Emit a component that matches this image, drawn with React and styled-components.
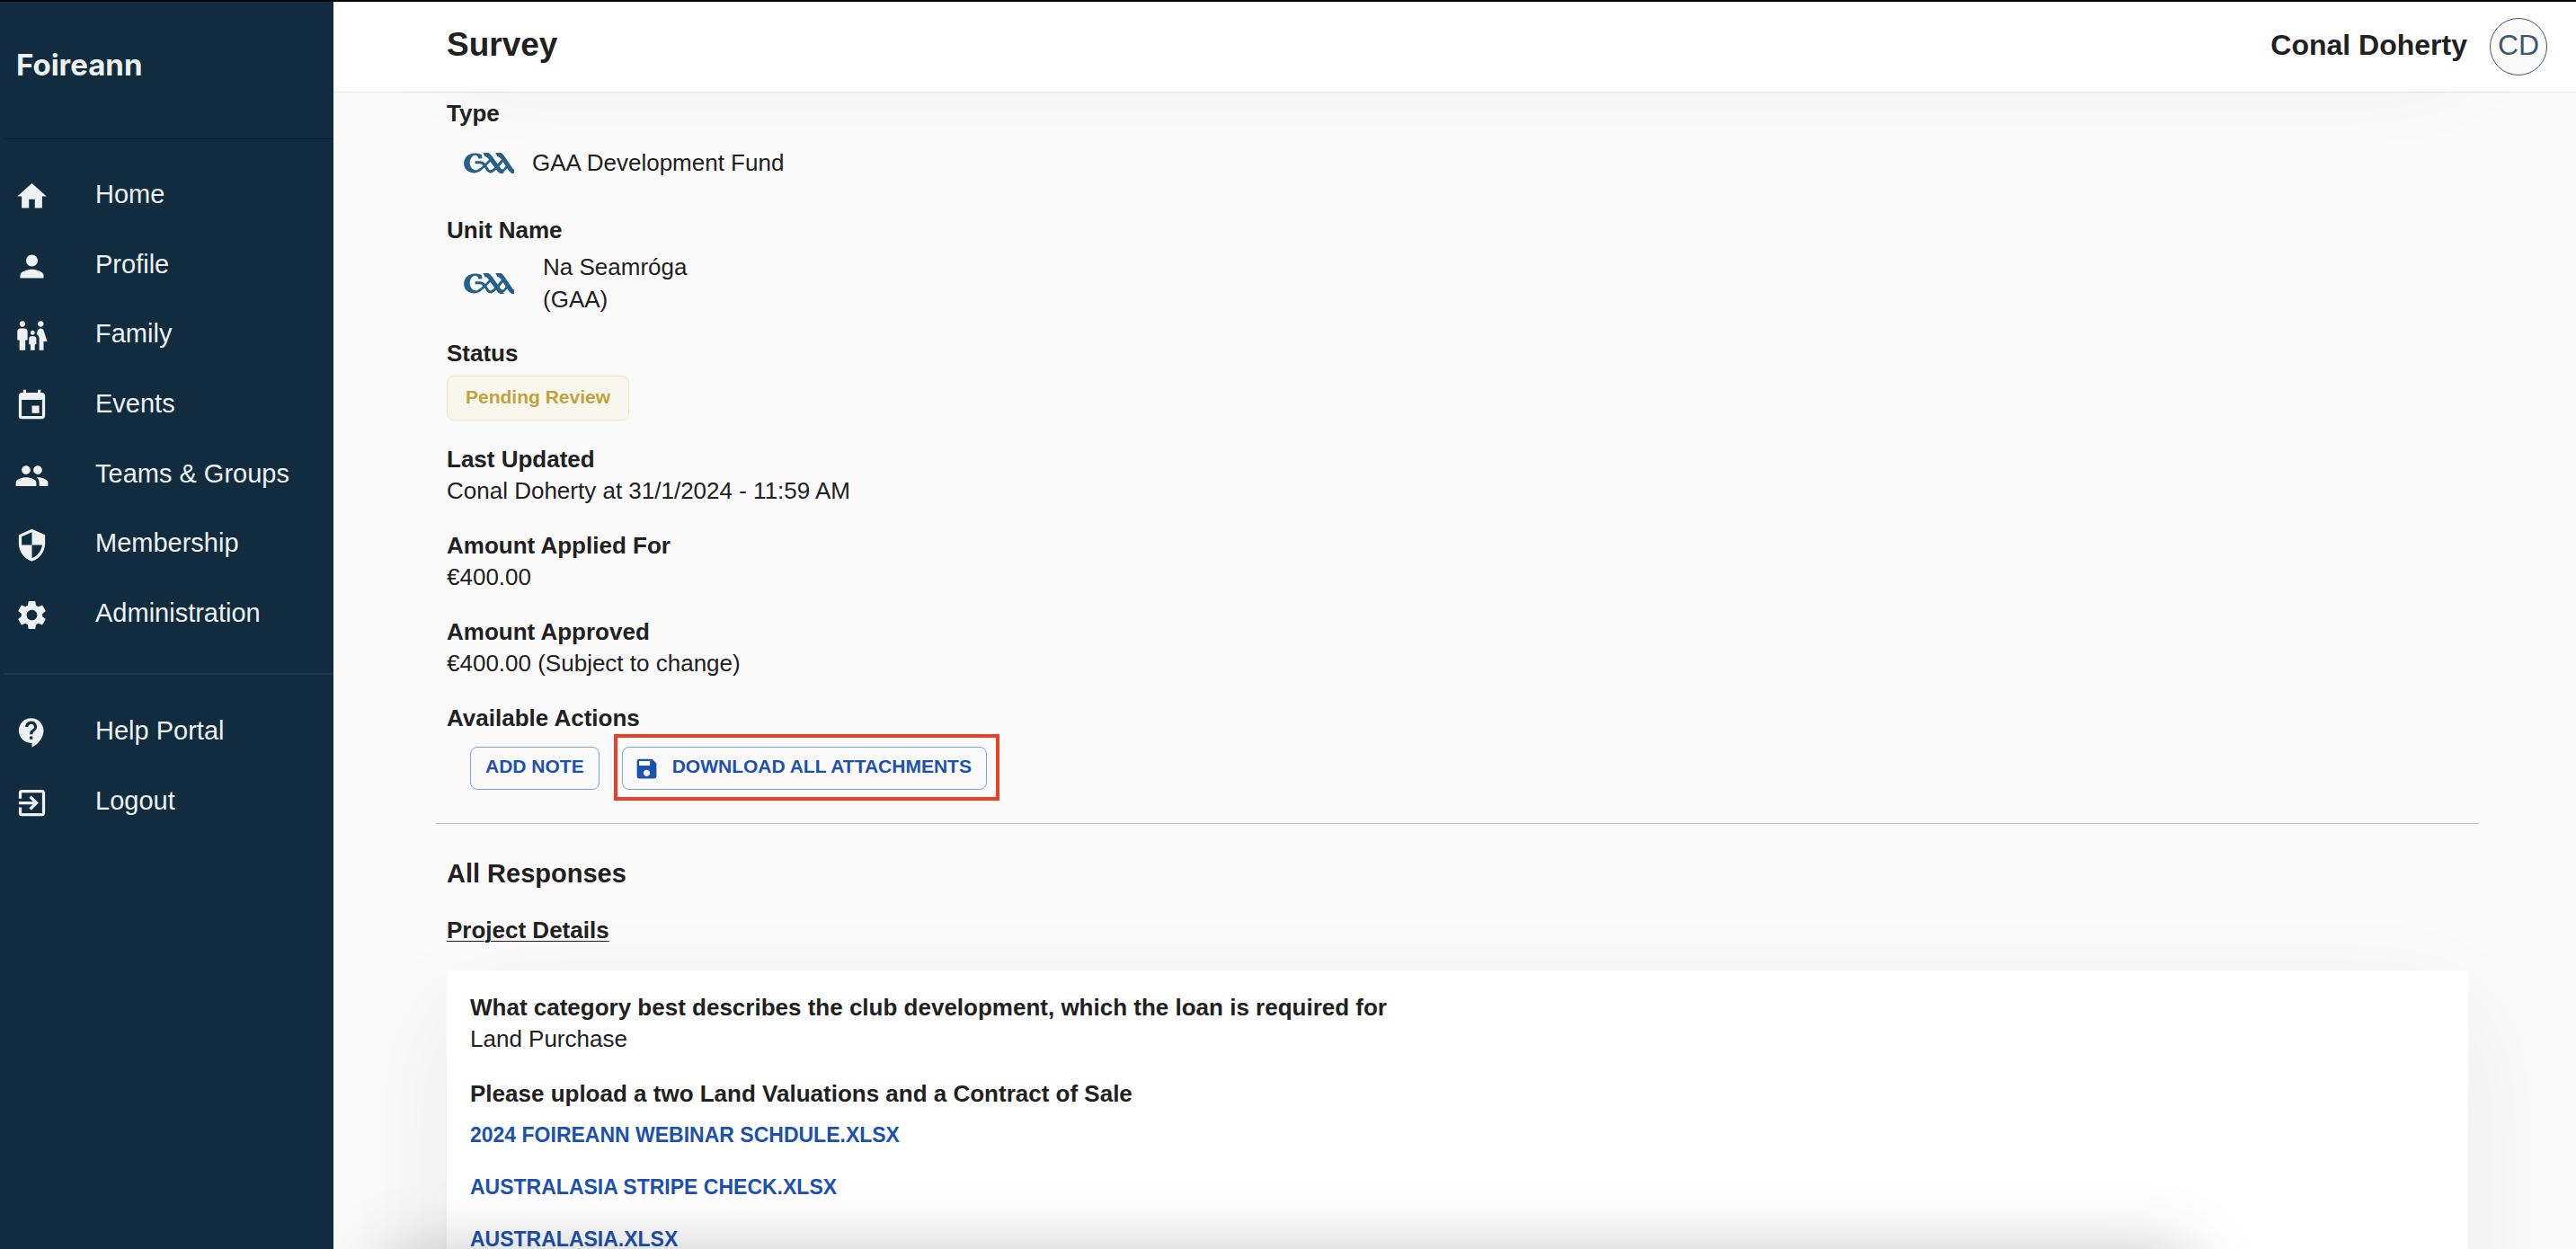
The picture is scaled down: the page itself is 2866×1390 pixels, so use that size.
import React from 'react'
import styled, { createGlobalStyle } from 'styled-components'
import {
  MdHome,
  MdPerson,
  MdFamilyRestroom,
  MdEvent,
  MdPeople,
  MdSecurity,
  MdSettings,
  MdContactSupport,
  MdExitToApp,
  MdSave
} from 'react-icons/md'

const GlobalStyle = createGlobalStyle`
  * {
    box-sizing: border-box;
  }

  body {
    margin: 0;
    background: #fafafa;
    color: #212121;
    font-family: 'Liberation Sans', Helvetica, Arial, sans-serif;
    font-size: 26px;
    line-height: 35px;
  }

  h1, h2, h3, dl, dd, ul {
    margin: 0;
    padding: 0;
  }
`

const Page = styled.div`
  position: relative;
  display: flex;
  height: 100vh;
  overflow: hidden;
  border-top: 2px solid #050505;
`

const Sidebar = styled.aside`
  flex: 0 0 371px;
  position: relative;
  z-index: 3;
  background: #102c3e;
  color: #eef1f2;
`

const Brand = styled.div`
  height: 152px;
  padding: 50px 18px 0;
  font-family: Inter, sans-serif;
  font-size: 33px;
  font-weight: 700;
  line-height: 40px;
`

const Rule = styled.hr`
  height: ${props => props.$size}px;
  margin: 0 1px 25px 5px;
  border: 0;
  background: ${props => props.$color};
`

const NavList = styled.ul`
  display: grid;
  grid-auto-rows: 1fr;
  height: ${props => props.$height}px;
  margin-bottom: 26px;
  list-style: none;
`

const NavLink = styled.a`
  display: flex;
  align-items: center;
  gap: 51px;
  height: 100%;
  padding-left: 16px;
  color: inherit;
  font-size: 29px;
  text-decoration: none;

  svg {
    width: 39px;
    height: 39px;
  }
`

const NavLabel = styled.span`
  padding-bottom: 4px;
`

const Main = styled.main`
  flex: 1;
  min-width: 0;
`

const Header = styled.header`
  position: relative;
  z-index: 2;
  display: flex;
  align-items: center;
  height: 101px;
  padding: 0 32px 0 126px;
  border-bottom: 1px solid #e4e4e4;
  background: #fff;
`

const Title = styled.h1`
  flex: 1;
  padding-bottom: 4px;
  font-size: 37px;
  line-height: 40px;
`

const UserName = styled.span`
  margin-right: 25px;
  padding-bottom: 4px;
  font-size: 32px;
  font-weight: 700;
`

const Avatar = styled.span`
  display: flex;
  justify-content: center;
  width: 64px;
  height: 64px;
  border: 1px solid #3c5a72;
  border-radius: 50%;
  background: #fafafa;
  color: #3c5a72;
  font-size: 32px;
  line-height: 58px;
`

const Content = styled.div`
  padding: 0 120px 0 126px;
`

const cardShadow = '0 40px 120px rgba(0, 0, 0, 0.06)'

const SummaryCard = styled.div`
  height: 300px;
  margin: -370px 0 70px;
  box-shadow: ${cardShadow};
`

const Details = styled.dl`
  position: relative;
  display: flex;
  flex-direction: column;
  gap: 26px;
  padding-top: 6px;
`

const Label = styled.dt`
  font-weight: 700;
`

const UnitRow = styled.dd`
  display: flex;
  align-items: center;
  gap: ${props => props.$gap}px;
  height: ${props => props.$height}px;
  padding: 6px 0 0 19px;
`

const UnitText = styled.span`
  width: 200px;
  line-height: 36px;
`

const Chip = styled.span`
  display: block;
  width: max-content;
  height: 50px;
  margin-top: 7px;
  padding: 0 20px;
  border: 1px solid #f4e7b8;
  border-radius: 8px;
  background: #f9f6ed;
  color: #c1a23c;
  font-size: 21px;
  font-weight: 700;
  line-height: 46px;
`

const Actions = styled.dd`
  display: flex;
  align-items: flex-start;
  gap: 25px;
  height: 73px;
  padding: 14px 0 0 26px;
`

const Highlight = styled.div`
  position: relative;

  &::after {
    content: '';
    position: absolute;
    inset: -14px -14px -12px -9px;
    border: 4px solid #ea4025;
    pointer-events: none;
  }
`

const Button = styled.button`
  display: flex;
  align-items: center;
  height: 48px;
  padding: 0 16px;
  border: 1px solid #82a2d6;
  border-radius: 8px;
  background: transparent;
  color: #1d51b0;
  font-family: inherit;
  font-size: 21px;
  font-weight: 700;
  line-height: 40px;

  svg {
    width: 29px;
    height: 29px;
    margin: 0 14px 0 -4px;
  }
`

const ButtonText = styled.span`
  padding-bottom: 4px;
`

const SectionRule = styled.hr`
  height: 1px;
  margin: 26px -12px 0;
  border: 0;
  background: #c4c4c4;
`

const Heading = styled.h2`
  padding-top: 38px;
  font-size: 29px;
`

const SubHeading = styled.h3`
  padding: 28px 0 27px;
  font-size: 26px;
  text-decoration: underline;
  text-decoration-thickness: 1px;
  text-underline-offset: 3px;
`

const ResponseCard = styled.section`
  position: relative;
  display: flex;
  flex-direction: column;
  gap: 26px;
  min-height: 800px;
  padding: 24px 26px;
  background: #fff;
  box-shadow: ${cardShadow};
`

const Question = styled.div`
  font-weight: 700;
`

const FileLink = styled.a`
  display: block;
  width: max-content;
  padding: 11px 0 12px;
  color: #1d51b0;
  font-size: 23px;
  font-weight: 700;
  text-decoration: none;
`

// sits just under the viewport, only its shadow reaches the page
const BottomPanel = styled.div`
  position: absolute;
  z-index: 1;
  top: 100%;
  left: 433px;
  right: 433px;
  height: 200px;
  box-shadow: 0 10px 80px rgba(0, 0, 0, 0.27);
`

const primaryLinks = [
  {label: 'Home', Icon: MdHome},
  {label: 'Profile', Icon: MdPerson},
  {label: 'Family', Icon: MdFamilyRestroom},
  {label: 'Events', Icon: MdEvent},
  {label: 'Teams & Groups', Icon: MdPeople},
  {label: 'Membership', Icon: MdSecurity},
  {label: 'Administration', Icon: MdSettings}
]

const secondaryLinks = [
  {label: 'Help Portal', Icon: MdContactSupport},
  {label: 'Logout', Icon: MdExitToApp}
]

const files = [
  '2024 FOIREANN WEBINAR SCHDULE.XLSX',
  'AUSTRALASIA STRIPE CHECK.XLSX',
  'AUSTRALASIA.XLSX'
]

const Nav = ({links, height}) =>
  <NavList $height={height}>
    {links.map(({label, Icon}) =>
      <li key={label}>
        <NavLink href='#'><Icon /><NavLabel>{label}</NavLabel></NavLink>
      </li>
    )}
  </NavList>

const GaaLogo = () =>
  <svg width='56' height='23' viewBox='0 0 169 68' fill='none' stroke='#265f88' role='img' aria-label='GAA'>
    <path
      d='M60 6C45 -2 22 -2 9 12C-4 28 -2 50 12 60C26 71 48 69 60 57L54 52C44 60 34 59 27 51C17 39 18 21 29 11C38 4 47 8 50 19L62 18Z'
      fill='#265f88'
      stroke='none'
    />
    <path d='M38 32H54C66 32 70 40 76 50C81 60 86 64 94 62' strokeWidth='9' />
    <path d='M48 60C62 52 78 36 93 20' strokeWidth='8' />
    <path d='M92 62C106 58 116 40 131 24' strokeWidth='9' />
    <path d='M68 6C76 2 82 5 89 16L115 52C120 60 124 64 132 61' strokeWidth='15' />
    <path d='M130 61C138 58 142 48 147 42' strokeWidth='8' />
    <path d='M110 6C118 2 124 5 131 16L155 52C160 60 163 63 169 63' strokeWidth='15' />
  </svg>

const Field = ({label, children}) =>
  <div>
    <Label>{label}</Label>
    <dd>{children}</dd>
  </div>

const App = () =>
  <Page>
    <GlobalStyle />
    <Sidebar>
      <Brand>Foireann</Brand>
      <Rule $size={1} $color='#082235' />
      <Nav links={primaryLinks} height={543} />
      <Rule $size={2} $color='#203b4c' />
      <Nav links={secondaryLinks} height={156} />
    </Sidebar>
    <Main>
      <Header>
        <Title>Survey</Title>
        <UserName>Conal Doherty</UserName>
        <Avatar>CD</Avatar>
      </Header>
      <Content>
        <SummaryCard />
        <Details>
          <div>
            <Label>Type</Label>
            <UnitRow $gap={20} $height={69}>
              <GaaLogo />
              <span>GAA Development Fund</span>
            </UnitRow>
          </div>
          <div>
            <Label>Unit Name</Label>
            <UnitRow $gap={32} $height={76}>
              <GaaLogo />
              <UnitText>Na Seamróga (GAA)</UnitText>
            </UnitRow>
          </div>
          <div>
            <Label>Status</Label>
            <dd><Chip>Pending Review</Chip></dd>
          </div>
          <Field label='Last Updated'>Conal Doherty at 31/1/2024 - 11:59 AM</Field>
          <Field label='Amount Applied For'>€400.00</Field>
          <Field label='Amount Approved'>€400.00 (Subject to change)</Field>
          <div>
            <Label>Available Actions</Label>
            <Actions>
              <Button type='button'><ButtonText>ADD NOTE</ButtonText></Button>
              <Highlight>
                <Button type='button'><MdSave /><ButtonText>DOWNLOAD ALL ATTACHMENTS</ButtonText></Button>
              </Highlight>
            </Actions>
          </div>
        </Details>
        <SectionRule />
        <Heading>All Responses</Heading>
        <SubHeading>Project Details</SubHeading>
        <ResponseCard>
          <div>
            <Question>What category best describes the club development, which the loan is required for</Question>
            <div>Land Purchase</div>
          </div>
          <div>
            <Question>Please upload a two Land Valuations and a Contract of Sale</Question>
            {files.map(file => <FileLink key={file} href='#'>{file}</FileLink>)}
          </div>
        </ResponseCard>
      </Content>
    </Main>
    <BottomPanel />
  </Page>

export default App
